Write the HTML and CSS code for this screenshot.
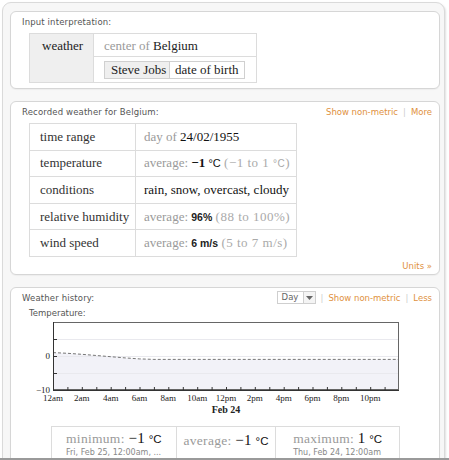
FILE: index.html
```html
<!DOCTYPE html>
<html>
<head>
<meta charset="utf-8">
<link rel="stylesheet" href="styles.css">
</head>
<body>
<div class="viewport">
  <div class="frame">
    <section class="pod pod-input">
      <div class="pod-head"><span class="pod-title">Input interpretation:</span></div>
      <table class="interp">
        <tr>
          <td class="kw" rowspan="2">weather</td>
          <td class="v1"><span class="g">center of</span> Belgium</td>
        </tr>
        <tr>
          <td class="v2">
            <table class="nest"><tr><td class="nk">Steve Jobs</td><td class="nv">date of birth</td></tr></table>
          </td>
        </tr>
      </table>
    </section>

    <section class="pod pod-recorded">
      <div class="pod-head">
        <span class="pod-title">Recorded weather for Belgium:</span>
        <span class="links"><a>Show non-metric</a><span class="pipe">|</span><a>More</a></span>
      </div>
      <table class="data">
        <tr><td class="k">time range</td><td class="v"><span class="g">day of</span> 24/02/1955</td></tr>
        <tr><td class="k">temperature</td><td class="v"><span class="g">average:</span> <span class="num">−1</span> <span class="unit">°C</span> <span class="lg">(−1 to 1 <span class="unit-s">°C</span>)</span></td></tr>
        <tr><td class="k">conditions</td><td class="v">rain, snow, overcast, cloudy</td></tr>
        <tr><td class="k">relative humidity</td><td class="v"><span class="g">average:</span> <span class="snum">96%</span> <span class="lg">(88 to 100%)</span></td></tr>
        <tr><td class="k">wind speed</td><td class="v"><span class="g">average:</span> <span class="snum">6 m/s</span> <span class="lg">(5 to 7 m/s)</span></td></tr>
      </table>
      <div class="units"><a>Units »</a></div>
    </section>

    <section class="pod pod-history">
      <div class="pod-head">
        <span class="pod-title">Weather history:</span>
        <span class="links">
          <span class="select"><span class="sel-text">Day</span><span class="sel-btn"><svg width="7" height="4" viewBox="0 0 7 4"><path d="M0 0H7L3.5 4Z" fill="#666"/></svg></span></span>
          <span class="pipe">|</span><a>Show non-metric</a><span class="pipe">|</span><a>Less</a>
        </span>
      </div>
      <div class="sub-title">Temperature:</div>
      <svg class="chart" width="417" height="100" viewBox="0 0 417 100">
        <g transform="translate(-22,-318)">
          <rect x="53.5" y="321.5" width="345" height="67" fill="#fff"/>
          <polygon points="53,351.6 67.4,352.3 81.8,353.3 96.3,354.5 110.7,355.7 125.1,356.9 139.5,357.9 153.9,358.4 399,358.4 399,389 53,389" fill="#f2f2f8"/>
          <g stroke="#e9e9ee" stroke-width="1">
            <line x1="54" y1="338.5" x2="398" y2="338.5"/>
            <line x1="54" y1="355.5" x2="398" y2="355.5"/>
            <line x1="54" y1="372.5" x2="398" y2="372.5"/>
          </g>
          <polyline points="53,351.6 67.4,352.3 81.8,353.3 96.3,354.5 110.7,355.7 125.1,356.9 139.5,357.9 153.9,358.4 399,358.4" fill="none" stroke="#777" stroke-width="1" stroke-dasharray="3,2"/>
          <rect x="53.5" y="321.5" width="345" height="67" fill="none" stroke="#666" stroke-width="1"/>
          <line x1="53.5" y1="321" x2="53.5" y2="389.5" stroke="#333"/>
          <line x1="53" y1="389.5" x2="399" y2="389.5" stroke="#333"/>
          <g stroke="#333" stroke-width="1">
            <line x1="54" y1="338.5" x2="57" y2="338.5"/>
            <line x1="54" y1="355.5" x2="57" y2="355.5"/>
            <line x1="54" y1="372.5" x2="57" y2="372.5"/>
            <line x1="67.9" y1="389" x2="67.9" y2="386"/>
            <line x1="82.3" y1="389" x2="82.3" y2="386"/>
            <line x1="96.8" y1="389" x2="96.8" y2="386"/>
            <line x1="111.2" y1="389" x2="111.2" y2="386"/>
            <line x1="125.6" y1="389" x2="125.6" y2="386"/>
            <line x1="140" y1="389" x2="140" y2="386"/>
            <line x1="154.4" y1="389" x2="154.4" y2="386"/>
            <line x1="168.8" y1="389" x2="168.8" y2="386"/>
            <line x1="183.3" y1="389" x2="183.3" y2="386"/>
            <line x1="197.7" y1="389" x2="197.7" y2="386"/>
            <line x1="212.1" y1="389" x2="212.1" y2="386"/>
            <line x1="226.5" y1="389" x2="226.5" y2="386"/>
            <line x1="240.9" y1="389" x2="240.9" y2="386"/>
            <line x1="255.3" y1="389" x2="255.3" y2="386"/>
            <line x1="269.8" y1="389" x2="269.8" y2="386"/>
            <line x1="284.2" y1="389" x2="284.2" y2="386"/>
            <line x1="298.6" y1="389" x2="298.6" y2="386"/>
            <line x1="313" y1="389" x2="313" y2="386"/>
            <line x1="327.4" y1="389" x2="327.4" y2="386"/>
            <line x1="341.8" y1="389" x2="341.8" y2="386"/>
            <line x1="356.3" y1="389" x2="356.3" y2="386"/>
            <line x1="370.7" y1="389" x2="370.7" y2="386"/>
            <line x1="385.1" y1="389" x2="385.1" y2="386"/>
          </g>
          <g class="axis-label" text-anchor="end">
            <text x="50" y="358">0</text>
            <text x="50" y="392">−10</text>
          </g>
          <g class="axis-label" text-anchor="middle">
            <text x="53" y="400">12am</text>
            <text x="81.8" y="400">2am</text>
            <text x="110.7" y="400">4am</text>
            <text x="139.5" y="400">6am</text>
            <text x="168.3" y="400">8am</text>
            <text x="197.2" y="400">10am</text>
            <text x="226" y="400">12pm</text>
            <text x="254.8" y="400">2pm</text>
            <text x="283.7" y="400">4pm</text>
            <text x="312.5" y="400">6pm</text>
            <text x="341.3" y="400">8pm</text>
            <text x="370.2" y="400">10pm</text>
          </g>
          <text class="axis-title" x="226" y="412" text-anchor="middle">Feb 24</text>
        </g>
      </svg>
      <table class="stats">
        <tr>
          <td class="c1"><div class="stat"><div class="main"><span class="g">minimum:</span> <span class="bn">−1</span> <span class="unit">°C</span></div><div class="when">Fri, Feb 25, 12:00am, ...</div></div></td>
          <td class="c2"><div class="stat"><div class="main"><span class="g">average:</span> <span class="bn">−1</span> <span class="unit">°C</span></div></div></td>
          <td class="c3"><div class="stat"><div class="main"><span class="g">maximum:</span> <span class="bn">1</span> <span class="unit">°C</span></div><div class="when">Thu, Feb 24, 12:00am</div></div></td>
        </tr>
      </table>
    </section>
  </div>
</div>
</body>
</html>
```

FILE: styles.css
```css
* { box-sizing: border-box; }
body { margin: 0; background: #fff; font-family: "DejaVu Sans", Verdana, sans-serif; }

.viewport {
  height: 460px;
  overflow: hidden;
  border-bottom: 2px solid #9a9a9a;
}

.frame {
  margin: 2px 4px 0 2px;
  border: 1px solid #dadada;
  border-radius: 9px;
  background: #f7f7f7;
  padding: 8px 4px 0 7px;
  box-shadow: 1px 1px 2px rgba(0,0,0,0.12);
  height: 600px;
}

.pod {
  background: #fff;
  border: 1px solid #d6d6d6;
  border-radius: 6px;
  padding: 4px 7px 5px 11px;
  margin-bottom: 12px;
  box-shadow: 0 1px 1px rgba(0,0,0,0.04);
}

.pod-head {
  display: flex;
  justify-content: space-between;
  align-items: center;
  height: 12px;
  font-size: 8.5px;
  line-height: 12px;
  color: #555;
}
.pod-title { letter-spacing: 0.15px; }

.links { display: flex; align-items: center; }
.links a { color: #e0913e; }
.pipe { color: #ccc; margin: 0 5px; }

.select {
  display: inline-flex;
  height: 13px;
  border: 1px solid #cfcfcf;
  background: #fff;
}
.sel-text { width: 25px; text-align: center; line-height: 11px; color: #666; }
.sel-btn {
  width: 12px;
  border-left: 1px solid #cfcfcf;
  display: flex;
  align-items: center;
  justify-content: center;
  background: #f4f4f4;
}

/* Input interpretation */
.interp {
  border-collapse: collapse;
  margin: 5px 0 0 7px;
  font-family: "Liberation Serif", serif;
  font-size: 13px;
  color: #222;
}
.interp td { border: 1px solid #dcdcdc; padding: 0; }
.interp .kw {
  width: 64px;
  background: #efefef;
  vertical-align: top;
  padding: 4px 0 0 12px;
  line-height: 15px;
}
.interp .v1 { width: 163px; height: 23px; padding-left: 10px; line-height: 15px; }
.interp .v2 { height: 26px; padding-left: 10px; }
.g { color: #9a9a9a; }

.nest { border-collapse: collapse; font-size: 13px; }
.nest td { border: 1px solid #d0d0d0; height: 17px; line-height: 14px; padding: 0; }
.nest .nk { background: #efefef; width: 65px; padding-left: 6px; }
.nest .nv { width: 75px; padding-left: 5px; }

/* Recorded weather */
.data {
  border-collapse: collapse;
  margin: 5px 0 0 7px;
  width: 268px;
  font-family: "Liberation Serif", serif;
  font-size: 13px;
  color: #333;
}
.data td { border: 1px solid #dcdcdc; height: 26.6px; padding: 0; white-space: nowrap; }
.data .k { width: 106px; padding-left: 10px; color: #333; }
.data .v { padding-left: 8px; color: #111; }
.num { font-weight: bold; color: #111; }
.unit { font-family: "Liberation Sans", sans-serif; font-size: 11px; color: #111; }
.unit-s { font-family: "Liberation Sans", sans-serif; font-size: 10px; }
.lg { color: #aaa; letter-spacing: 0.5px; }
.snum { font-family: "Liberation Sans", sans-serif; font-size: 10.5px; font-weight: bold; color: #222; }

.units {
  text-align: right;
  margin-top: 3px;
  font-size: 8.5px;
  line-height: 12px;
}
.units a { color: #e0913e; }
.pod-recorded { padding-bottom: 2px; }

/* History */
.sub-title {
  margin: 3px 0 0 7px;
  font-size: 8.5px;
  line-height: 12px;
  color: #555;
}
.chart { display: block; }
.axis-label { font-family: "Liberation Serif", serif; font-size: 9px; fill: #222; }
.axis-title { font-family: "Liberation Serif", serif; font-size: 10px; font-weight: bold; fill: #222; }

.stats {
  border-collapse: collapse;
  margin: 7px 0 0 29px;
  width: 349px;
}
.stats td { border: 1px solid #dcdcdc; padding: 3px 0 6px; text-align: center; vertical-align: top; }
.stats .c1 { width: 125px; }
.stats .c2 { width: 100px; }
.stats .c3 { width: 124px; }
.stat { display: inline-block; text-align: left; }
.main { font-family: "Liberation Serif", serif; font-size: 13.5px; line-height: 16px; color: #111; letter-spacing: 0.3px; }
.bn { font-size: 15px; color: #111; }
.main .unit { font-size: 11.5px; letter-spacing: 0; }
.when { font-size: 8px; line-height: 12px; color: #888; }
```
